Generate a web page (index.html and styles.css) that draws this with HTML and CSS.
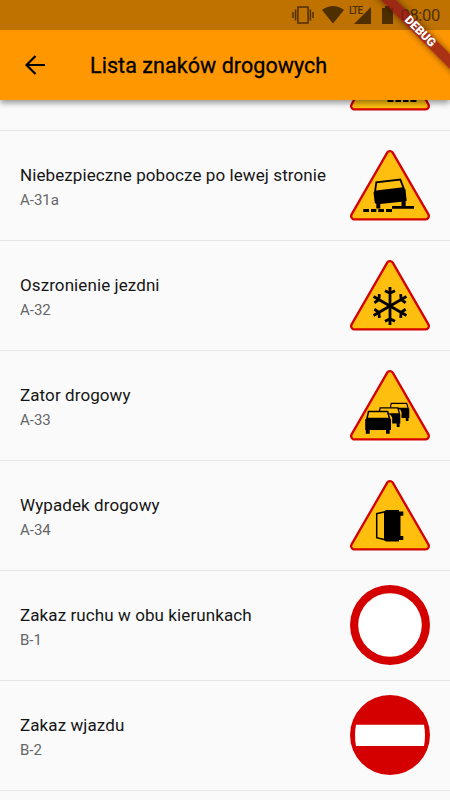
FILE: index.html
```html
<!DOCTYPE html>
<html lang="pl">
<head>
    <meta charset="UTF-8">
    <meta name="viewport" content="width=device-width, initial-scale=1.0">
    <title>Lista znaków drogowych</title>
    <link rel="stylesheet" href="styles.css">
</head>
<body>

<!-- wspólne tło znaków ostrzegawczych -->
<svg class="symbols" width="0" height="0">
    <symbol id="triangle" viewBox="0 0 80 71">
        <path d="M40 4.5L4.5 66h71z" fill="#d40000" stroke="#d40000" stroke-width="9" stroke-linejoin="round"/>
        <path d="M40 4.5L4.5 66h71z" fill="#ffbf0f" stroke="#ffbf0f" stroke-width="4.4" stroke-linejoin="round"/>
    </symbol>
</svg>

<header>
    <div class="status-bar">
        <svg class="vibrate" width="22" height="20" viewBox="0 0 22 20">
            <path d="M5.9 1.9h10.2v16.2H5.9zM3.6 4.5v11M18.4 4.5v11M1 7v6M21 7v6" fill="none" stroke="currentColor" stroke-width="1.5"/>
        </svg>
        <svg class="wifi" width="22" height="18" viewBox="0 0 22 18">
            <path d="M0 4Q11 -4 22 4L11 17.5z" fill="currentColor"/>
        </svg>
        <span class="lte">LTE</span>
        <svg class="signal" width="17" height="17" viewBox="0 0 17 17">
            <path d="M17 0v17H0z" fill="currentColor"/>
        </svg>
        <svg class="battery" width="11" height="18" viewBox="0 0 11 18">
            <path d="M3 0h5v2h3v16H0V2h3z" fill="currentColor"/>
        </svg>
        <span class="clock">08:00</span>
    </div>
    <div class="app-bar">
        <svg class="back" width="20" height="20" viewBox="0 0 20 20">
            <path d="M20 10H2M10.5 1L1.5 10l9 9" fill="none" stroke="currentColor" stroke-width="2.2"/>
        </svg>
        <h1>Lista znaków drogowych</h1>
    </div>
    <div class="corner">
        <div class="debug">DEBUG</div>
    </div>
</header>

<main>
    <section class="row clipped">
        <svg class="sign" width="80" height="71" viewBox="0 0 80 71">
            <use href="#triangle"/>
            <path d="M37.5 59h6v3h-6zM45.5 59H51v3h-5.5zM53 59h5.5v3H53zM60.5 59h6v3h-6z"/>
        </svg>
    </section>

    <section class="row">
        <div class="text">
            <h2>Niebezpieczne pobocze po lewej stronie</h2>
            <p>A-31a</p>
        </div>
        <svg class="sign" width="80" height="71" viewBox="0 0 80 71">
            <use href="#triangle"/>
            <path d="M25 42L26.3 32.3 50.3 29.5 54 39" fill="none" stroke="#000" stroke-width="1.8"/>
            <path d="M23.500 42.500l2.500-2 27-3.200 2.500 2.200 1.200 11.200-1 .5v5.500h-4.200v-5l-21.200 2.300v4.500h-4v-4.500l-1.500-1z"/>
            <path d="M13.3 59H19v2.900h-5.700zM21 59h5.300v2.900H21zM28.3 59H34v2.900h-5.700zM36 59h6v2.900h-6zM42 56h22v2.800H42z"/>
        </svg>
    </section>

    <section class="row">
        <div class="text">
            <h2>Oszronienie jezdni</h2>
            <p>A-32</p>
        </div>
        <svg class="sign" width="80" height="71" viewBox="0 0 80 71">
            <use href="#triangle"/>
            <g fill="none" stroke="#000" stroke-width="2.8">
                <path id="arm" d="M40 27v38M35 30.8l5 2.4 5-2.4M35 61.2l5-2.4 5 2.4"/>
                <use href="#arm" transform="rotate(60 40 46)"/>
                <use href="#arm" transform="rotate(-60 40 46)"/>
            </g>
        </svg>
    </section>

    <section class="row">
        <div class="text">
            <h2>Zator drogowy</h2>
            <p>A-33</p>
        </div>
        <svg class="sign" width="80" height="71" viewBox="0 0 80 71">
            <use href="#triangle"/>
            <g fill="none" stroke="#000">
                <path d="M17 48.5l1.5-6.9h19.2l1.800 6.900" stroke-width="1.5"/>
                <path d="M29.3 41.5l.9-3.700h17.600l1.700 6" stroke-width="1.3"/>
                <path d="M40.5 37.5l.7-4.100h15.500l1.500 5" stroke-width="1.2"/>
            </g>
            <path d="M15.2 49.5l1.700-1.800h22.600l1.500 1.800V60h-1.300v3.800H36V60H19.700v3.800h-3.900V60h-.6z"/>
            <path d="M37.5 43.2H49l1.300 1V53.500h-.7v3.500h-2.900v-3.500h-4.500V47.500l-2-3h-2.700z"/>
            <path d="M48 37.7h10l1.300 1V48h-.8v3h-2.700v-3h-4.300v-6l-1.300-2.500H48z"/>
        </svg>
    </section>

    <section class="row">
        <div class="text">
            <h2>Wypadek drogowy</h2>
            <p>A-34</p>
        </div>
        <svg class="sign" width="80" height="71" viewBox="0 0 80 71">
            <use href="#triangle"/>
            <path d="M35 31.7l-8.3 2v24l8.3 2" fill="none" stroke="#000" stroke-width="1.5"/>
            <path d="M34 31.5l2-1.5h13v1.500h4.300v4.200H50.500V56h2.800v4H49v1.500H36L34 60z"/>
        </svg>
    </section>

    <section class="row">
        <div class="text">
            <h2>Zakaz ruchu w obu kierunkach</h2>
            <p>B-1</p>
        </div>
        <svg class="sign" width="80" height="80" viewBox="0 0 80 80">
            <circle cx="40" cy="40" r="40" fill="#d40000"/>
            <circle cx="40" cy="40" r="31.8" fill="#fff"/>
        </svg>
    </section>

    <section class="row">
        <div class="text">
            <h2>Zakaz wjazdu</h2>
            <p>B-2</p>
        </div>
        <svg class="sign" width="80" height="80" viewBox="0 0 80 80">
            <circle cx="40" cy="40" r="40" fill="#d40000"/>
            <path d="M6 29.700h68q2 10.500 0 21.200H6q-2-10.700 0-21.200z" fill="#fff"/>
        </svg>
    </section>
</main>

</body>
</html>
```
FILE: styles.css
```css
body {
    margin: 0;
    height: 800px;
    overflow: hidden;
    font-family: Roboto, "Liberation Sans", sans-serif;
    background-color: #fafafa;
}

.symbols {
    position: absolute;
}

header {
    position: relative;
    height: 100px;
    background-color: #ff9800;
    box-shadow: 0 3px 6px rgba(0, 0, 0, 0.4);
}

/* pasek stanu */
.status-bar {
    display: flex;
    height: 30px;
    box-sizing: border-box;
    padding: 5px 10px 0 292px;
    background-color: #bf7200;
    color: #4f2f00;
}

.status-bar svg {
    flex-shrink: 0;
}

.wifi {
    margin: 1px 0 0 8px;
}

.lte {
    margin-left: 5px;
    width: 12px;
    font-size: 10px;
    font-weight: 500;
    line-height: 11px;
    letter-spacing: -0.9px;
}

.signal {
    margin: 2px 0 0 -12px;
    padding-left: 5px;
}

.battery {
    margin: 1px 0 0 11px;
}

.clock {
    margin-left: auto;
    font-size: 16.5px;
    line-height: 21px;
    letter-spacing: -0.3px;
}

.app-bar {
    display: flex;
    align-items: center;
    height: 70px;
    padding-left: 25px;
}

.app-bar h1 {
    margin: 0 0 0 45px;
    font-size: 21.5px;
    font-weight: 400;
    letter-spacing: 0.06px;
    -webkit-text-stroke: 0.3px black;
}

/* wstążka w rogu */
.corner {
    position: absolute;
    top: 0;
    right: 0;
    width: 100px;
    height: 100px;
    overflow: hidden;
}

.debug {
    position: absolute;
    top: 26px;
    left: 10px;
    width: 120px;
    height: 11px;
    transform: rotate(45deg);
    background-color: rgba(145, 20, 25, 0.78);
    box-shadow: 0 0 7px rgba(0, 0, 0, 0.5);
    color: white;
    font-size: 12px;
    font-weight: 900;
    line-height: 11px;
    text-align: center;
}

.row {
    display: flex;
    justify-content: space-between;
    height: 110px;
    box-sizing: border-box;
    padding: 0 20px 1px;
    align-items: center;
    border-bottom: 1px solid #e6e6e6;
}

/* wiersz przewinięty pod nagłówek */
.clipped {
    height: 31px;
    justify-content: flex-end;
    align-items: flex-end;
    padding-bottom: 19px;
    overflow: hidden;
}

.row h2 {
    margin: 3px 0 0;
    font-size: 17px;
    font-weight: 400;
    line-height: 24px;
    letter-spacing: 0.09px;
    color: #151515;
}

.row p {
    margin: 3px 0 0;
    font-size: 15px;
    line-height: 20px;
    color: #666;
}
```
